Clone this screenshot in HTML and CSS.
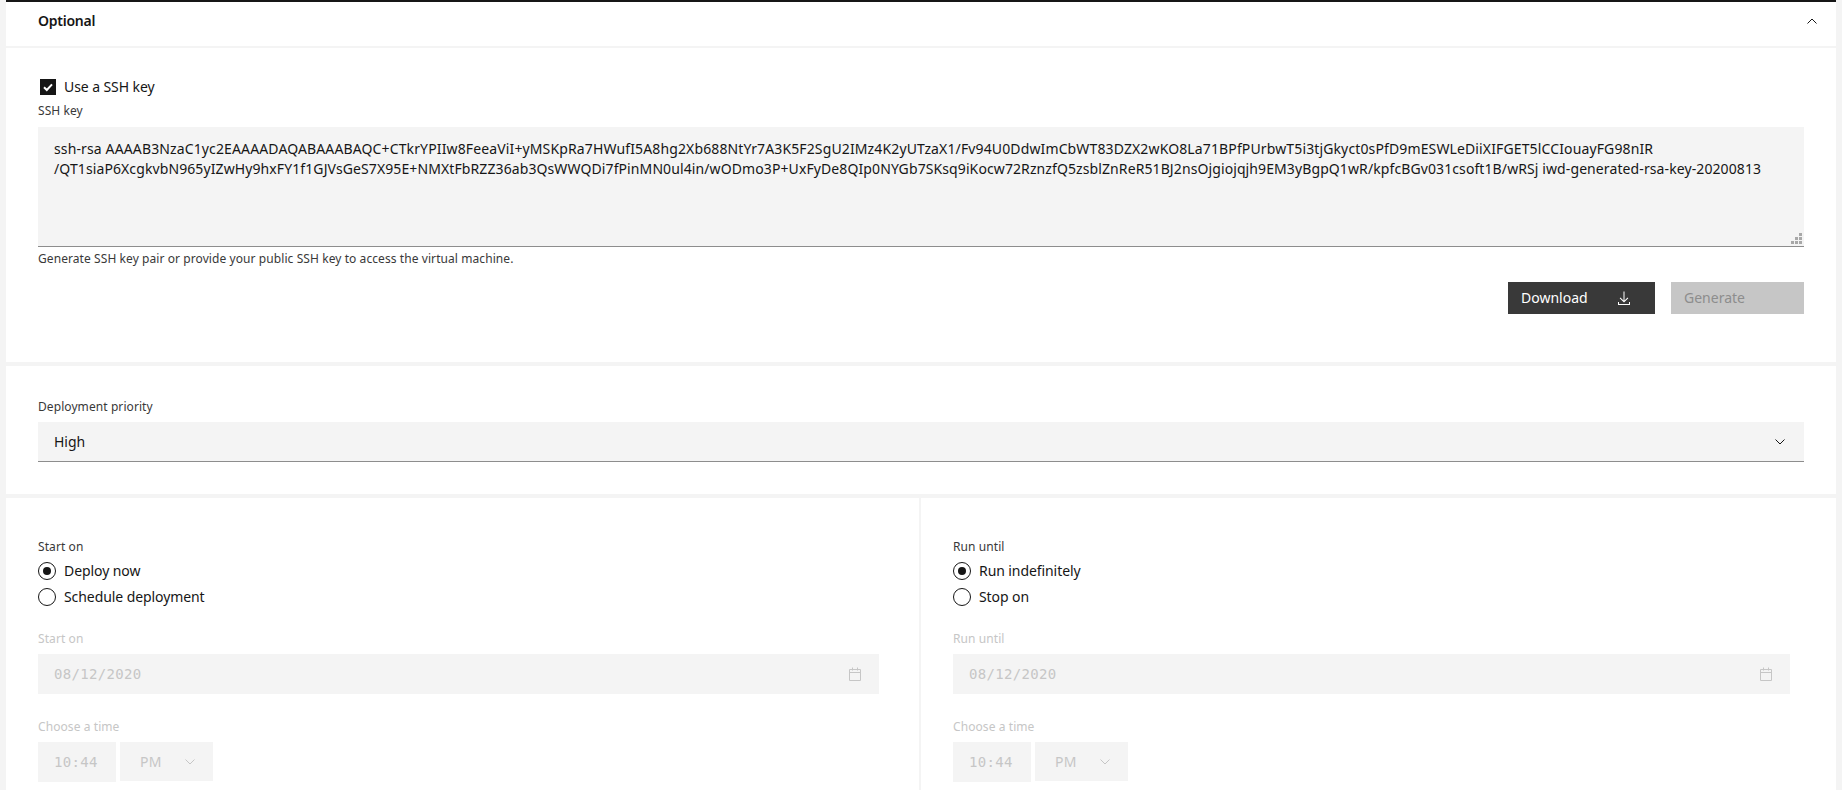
FILE: index.html
```html
<!DOCTYPE html>
<html lang="en">
<head>
<meta charset="utf-8">
<title>Optional</title>
<link rel="stylesheet" href="styles.css">
</head>
<body>
<main class="page">
  <header class="accordion-head">
    <h2 class="accordion-title">Optional</h2>
    <svg class="chevron-up" width="16" height="16" viewBox="0 0 16 16"><path d="M3.500 10.500 8 6l4.500 4.500" fill="none" stroke="#161616" stroke-width="1"/></svg>
  </header>

  <section class="card ssh">
    <label class="check-row">
      <span class="checkbox"><svg width="12" height="12" viewBox="0 0 12 12"><path d="M2 6.200 4.800 9 10 3.400" fill="none" stroke="#fff" stroke-width="2"/></svg></span>
      <span class="option-text">Use a SSH key</span>
    </label>
    <div class="label ssh-label">SSH key</div>
    <div class="textarea"><div class="key-line">ssh-rsa AAAAB3NzaC1yc2EAAAADAQABAAABAQC+CTkrYPIIw8FeeaViI+yMSKpRa7HWufI5A8hg2Xb688NtYr7A3K5F2SgU2IMz4K2yUTzaX1/Fv94U0DdwImCbWT83DZX2wKO8La71BPfPUrbwT5i3tjGkyct0sPfD9mESWLeDiiXIFGET5lCCIouayFG98nIR</div><div class="key-line key-line-second">/QT1siaP6XcgkvbN965yIZwHy9hxFY1f1GJVsGeS7X95E+NMXtFbRZZ36ab3QsWWQDi7fPinMN0ul4in/wODmo3P+UxFyDe8QIp0NYGb7SKsq9iKocw72RznzfQ5zsblZnReR51BJ2nsOjgiojqjh9EM3yBgpQ1wR/kpfcBGv031csoft1B/wRSj iwd-generated-rsa-key-20200813</div>
      <span class="grip">
        <i></i><i></i><i></i><i></i><i></i><i></i>
      </span>
    </div>
    <p class="helper">Generate SSH key pair or provide your public SSH key to access the virtual machine.</p>
    <div class="actions">
      <button class="btn btn-dark" type="button"><span>Download</span>
        <svg width="16" height="16" viewBox="0 0 16 16"><path d="M13 12v2H3v-2H2v3h12v-3z M8.500 1.500h-1v9.100L4.400 7.500l-.7.700L8 12.500l4.300-4.300-.7-.7-3.100 3.100z" fill="#fff"/></svg>
      </button>
      <button class="btn btn-off" type="button">Generate</button>
    </div>
  </section>

  <section class="card priority">
    <div class="label">Deployment priority</div>
    <div class="select">
      <span>High</span>
      <svg width="16" height="16" viewBox="0 0 16 16"><path d="M3.500 5.500 8 10l4.500-4.500" fill="none" stroke="#161616" stroke-width="1"/></svg>
    </div>
  </section>

  <section class="schedule">
    <div class="col col-left">
      <div class="label">Start on</div>
      <div class="radio-row"><span class="radio on"></span><span class="option-text">Deploy now</span></div>
      <div class="radio-row"><span class="radio"></span><span class="option-text">Schedule deployment</span></div>
      <div class="label off date-label">Start on</div>
      <div class="date-input">
        <span>08/12/2020</span>
        <svg width="14" height="16" viewBox="0 0 14 16"><path d="M1.500 3.500h11v11h-11z M1.500 6.500h11 M4.500 1.500v3 M9.500 1.500v3" fill="none" stroke="#c6c6c6" stroke-width="1"/></svg>
      </div>
      <div class="label off time-label">Choose a time</div>
      <div class="time-row">
        <div class="time-input">10:44</div>
        <div class="ampm"><span>PM</span><svg width="16" height="16" viewBox="0 0 16 16"><path d="M3.500 5.500 8 10l4.500-4.500" fill="none" stroke="#c6c6c6" stroke-width="1"/></svg></div>
      </div>
    </div>
    <div class="col col-right">
      <div class="label">Run until</div>
      <div class="radio-row"><span class="radio on"></span><span class="option-text">Run indefinitely</span></div>
      <div class="radio-row"><span class="radio"></span><span class="option-text">Stop on</span></div>
      <div class="label off date-label">Run until</div>
      <div class="date-input">
        <span>08/12/2020</span>
        <svg width="14" height="16" viewBox="0 0 14 16"><path d="M1.500 3.500h11v11h-11z M1.500 6.500h11 M4.500 1.500v3 M9.500 1.500v3" fill="none" stroke="#c6c6c6" stroke-width="1"/></svg>
      </div>
      <div class="label off time-label">Choose a time</div>
      <div class="time-row">
        <div class="time-input">10:44</div>
        <div class="ampm"><span>PM</span><svg width="16" height="16" viewBox="0 0 16 16"><path d="M3.500 5.500 8 10l4.500-4.500" fill="none" stroke="#c6c6c6" stroke-width="1"/></svg></div>
      </div>
    </div>
  </section>
</main>
</body>
</html>
```

FILE: styles.css
```css
* { box-sizing: border-box; }
html, body { margin: 0; height: 790px; overflow: hidden; }
body {
  background: #f4f4f4;
  color: #161616;
  font-family: "Noto Sans", "Liberation Sans", sans-serif;
  font-size: 14px;
}
.page {
  height: 790px;
  margin: 0 6px;
  border-top: 2px solid #161616;
  display: flex;
  flex-direction: column;
  background: #f4f4f4;
}
.accordion-head {
  height: 44px;
  flex: none;
  background: #fff;
  display: flex;
  align-items: center;
  justify-content: space-between;
  padding: 0 16px 6px 32px;
}
.accordion-title { margin: 0; font-size: 14px; font-weight: 600; line-height: 18px; letter-spacing: -.24px; }
.card { background: #fff; padding: 0 32px; flex: none; }
.ssh { margin-top: 2px; height: 314px; padding-top: 30px; }
.check-row { display: flex; align-items: center; gap: 8px; height: 18px; padding-left: 2px; }
.checkbox { width: 16px; height: 16px; background: #161616; display: flex; align-items: center; justify-content: center; }
.option-text { font-size: 14px; line-height: 18px; letter-spacing: -.08px; }
.label { height: 16px; padding-top: 1px; font-size: 12px; line-height: 16px; letter-spacing: .08px; color: #393939; }
.label.off { color: #c6c6c6; }
.ssh-label { margin-top: 6px; }
.textarea {
  position: relative;
  margin-top: 9px;
  height: 120px;
  background: #f4f4f4;
  border-bottom: 1px solid #8d8d8d;
  padding: 12px 16px;
  font-size: 14px;
  line-height: 20px;
  letter-spacing: .13px;
  white-space: nowrap;
}
.key-line { height: 20px; }
.key-line-second { letter-spacing: .1px; }
.grip {
  position: absolute;
  right: 2px;
  bottom: 2px;
  width: 11px;
  height: 11px;
  display: grid;
  grid-template-columns: repeat(3, 3px);
  grid-template-rows: repeat(3, 3px);
  gap: 1px;
}
.grip i { background: #a8a8a8; }
.grip i:nth-child(1) { grid-area: 1 / 3; }
.grip i:nth-child(2) { grid-area: 2 / 2; }
.grip i:nth-child(3) { grid-area: 2 / 3; }
.grip i:nth-child(4) { grid-area: 3 / 1; }
.grip i:nth-child(5) { grid-area: 3 / 2; }
.grip i:nth-child(6) { grid-area: 3 / 3; }
.helper { margin: 4px 0 0; font-size: 12px; line-height: 16px; letter-spacing: .08px; color: #393939; }
.actions { display: flex; justify-content: flex-end; gap: 16px; margin-top: 15px; }
.btn {
  height: 32px;
  border: 0;
  padding: 0 13px 1px;
  font: inherit;
  font-size: 14px;
  letter-spacing: 0;
  text-align: left;
  display: flex;
  align-items: center;
}
.btn-dark { width: 147px; background: #393939; color: #fff; justify-content: space-between; padding-right: 23px; }
.btn-off { width: 133px; background: #c6c6c6; color: #8d8d8d; }
.priority { margin-top: 4px; height: 128px; padding-top: 32px; }
.select {
  margin-top: 8px;
  height: 40px;
  background: #f4f4f4;
  border-bottom: 1px solid #8d8d8d;
  padding: 0 16px;
  display: flex;
  align-items: center;
  justify-content: space-between;
}
.schedule { margin-top: 4px; flex: 1; display: grid; grid-template-columns: 913px 1fr; }
.col { background: #fff; padding-top: 40px; }
.col-left { padding-left: 32px; padding-right: 40px; }
.col-right { border-left: 2px solid #f4f4f4; padding-left: 32px; padding-right: 46px; }
.radio-row { display: flex; align-items: center; gap: 8px; height: 18px; margin-top: 8px; }
.radio { width: 18px; height: 18px; border: 1px solid #161616; border-radius: 50%; display: flex; align-items: center; justify-content: center; flex: none; }
.radio.on::before { content: ""; width: 8px; height: 8px; border-radius: 50%; background: #161616; }
.date-label { margin-top: 24px; }
.date-input {
  margin-top: 8px;
  height: 40px;
  background: #f4f4f4;
  color: #c6c6c6;
  padding: 0 16px;
  display: flex;
  align-items: center;
  justify-content: space-between;
  font-family: "DejaVu Sans Mono", "Liberation Mono", monospace;
  font-size: 14px;
  letter-spacing: .32px;
}
.date-input svg { margin-right: 1px; }
.time-label { margin-top: 24px; }
.time-row { display: flex; gap: 4px; margin-top: 8px; }
.time-input {
  width: 78px;
  height: 40px;
  background: #f4f4f4;
  color: #c6c6c6;
  padding-left: 16px;
  display: flex;
  align-items: center;
  font-family: "DejaVu Sans Mono", "Liberation Mono", monospace;
  font-size: 14px;
  letter-spacing: .32px;
}
.ampm {
  width: 93px;
  height: 39px;
  background: #f4f4f4;
  color: #c6c6c6;
  padding: 0 15px 0 20px;
  display: flex;
  align-items: center;
  justify-content: space-between;
  letter-spacing: .16px;
}
```
